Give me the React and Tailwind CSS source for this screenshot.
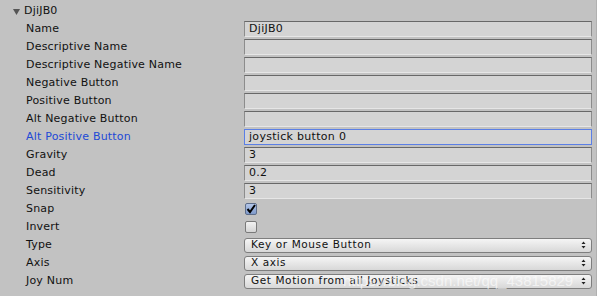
import React from 'react';

const rows = [
  { label: 'Name', kind: 'text', value: 'DjiJB0' },
  { label: 'Descriptive Name', kind: 'text', value: '' },
  { label: 'Descriptive Negative Name', kind: 'text', value: '' },
  { label: 'Negative Button', kind: 'text', value: '' },
  { label: 'Positive Button', kind: 'text', value: '' },
  { label: 'Alt Negative Button', kind: 'text', value: '' },
  { label: 'Alt Positive Button', kind: 'text', value: 'joystick button 0', focus: true },
  { label: 'Gravity', kind: 'text', value: '3' },
  { label: 'Dead', kind: 'text', value: '0.2' },
  { label: 'Sensitivity', kind: 'text', value: '3' },
  { label: 'Snap', kind: 'check', value: true },
  { label: 'Invert', kind: 'check', value: false },
  { label: 'Type', kind: 'select', value: 'Key or Mouse Button' },
  { label: 'Axis', kind: 'select', value: 'X axis' },
  { label: 'Joy Num', kind: 'select', value: 'Get Motion from all Joysticks' },
];

export default function App() {
  return (
    <div
      className="relative w-[597px] h-[296px] overflow-hidden bg-[#c2c2c2] text-[11px] text-[#111] border-r border-r-[#b0b0b0]"
      style={{ fontFamily: '"DejaVu Sans", Verdana, sans-serif' }}
    >
      {/* foldout header */}
      <div className="h-[18px] mt-[2px] flex items-center pl-[12px] gap-[3px]">
        <svg width="9" height="9" viewBox="0 0 9 9" className="mt-[1px]">
          <path d="M1 2 L8 2 L4.5 8 Z" fill="#555" />
        </svg>
        <span className="tracking-[0.2px]">DjiJB0</span>
      </div>

      <div className="flex flex-col">
        {rows.map((r) => (
          <div key={r.label} className="h-[18px] grid grid-cols-[244px_348px] items-center">
            <div className={`pl-[26px] pt-[1px] tracking-[0.2px] ${r.focus ? 'text-[#2149d6]' : ''}`}>{r.label}</div>
            <Field r={r} />
          </div>
        ))}
      </div>

      {/* watermark */}
      <div
        className="absolute left-[343px] top-[272px] text-[15px] leading-[18px] text-white/60 pointer-events-none"
        style={{ fontFamily: '"Liberation Sans", Arial, sans-serif' }}
      >
        https://blog.csdn.net/qq_43815829
      </div>
    </div>
  );
}

function Field({ r }) {
  if (r.kind === 'text') {
    return (
      <div
        className={`h-[16px] flex items-center pl-[4px] pt-[1px] tracking-[0.3px] bg-[#d4d4d4] border ${
          r.focus
            ? 'border-[#5b7fe6]'
            : 'border-t-[#686868] border-l-[#8c8c8c] border-r-[#8c8c8c] border-b-[#e6e6e6]'
        }`}
      >
        {r.value}
      </div>
    );
  }
  if (r.kind === 'check') {
    return (
      <div className="pl-[1px] flex items-center">
        <div
          className={`w-[12px] h-[12px] rounded-[2px] border flex items-center justify-center ${
            r.value
              ? 'border-[#5d6d8a] bg-gradient-to-b from-[#b3c6e8] to-[#7f9acb]'
              : 'border-[#7a7a7a] bg-gradient-to-b from-[#f2f2f2] to-[#d4d4d4]'
          }`}
        >
          {r.value && (
            <svg width="10" height="10" viewBox="0 0 10 10">
              <path d="M1.5 5 L4 8 L9 1" stroke="#000" strokeWidth="2" fill="none" />
            </svg>
          )}
        </div>
      </div>
    );
  }
  return (
    <div className="h-[15px] rounded-[3px] border border-[#7e7e7e] bg-gradient-to-b from-[#f5f5f5] to-[#d8d8d8] flex items-center justify-between pl-[6px] pr-[5px] text-[10.5px] tracking-[0.6px]">
      <span>{r.value}</span>
      <svg width="5" height="8" viewBox="0 0 5 8">
        <path d="M0.5 3 L2.5 0.5 L4.5 3 Z M0.5 5 L2.5 7.5 L4.5 5 Z" fill="#222" />
      </svg>
    </div>
  );
}
